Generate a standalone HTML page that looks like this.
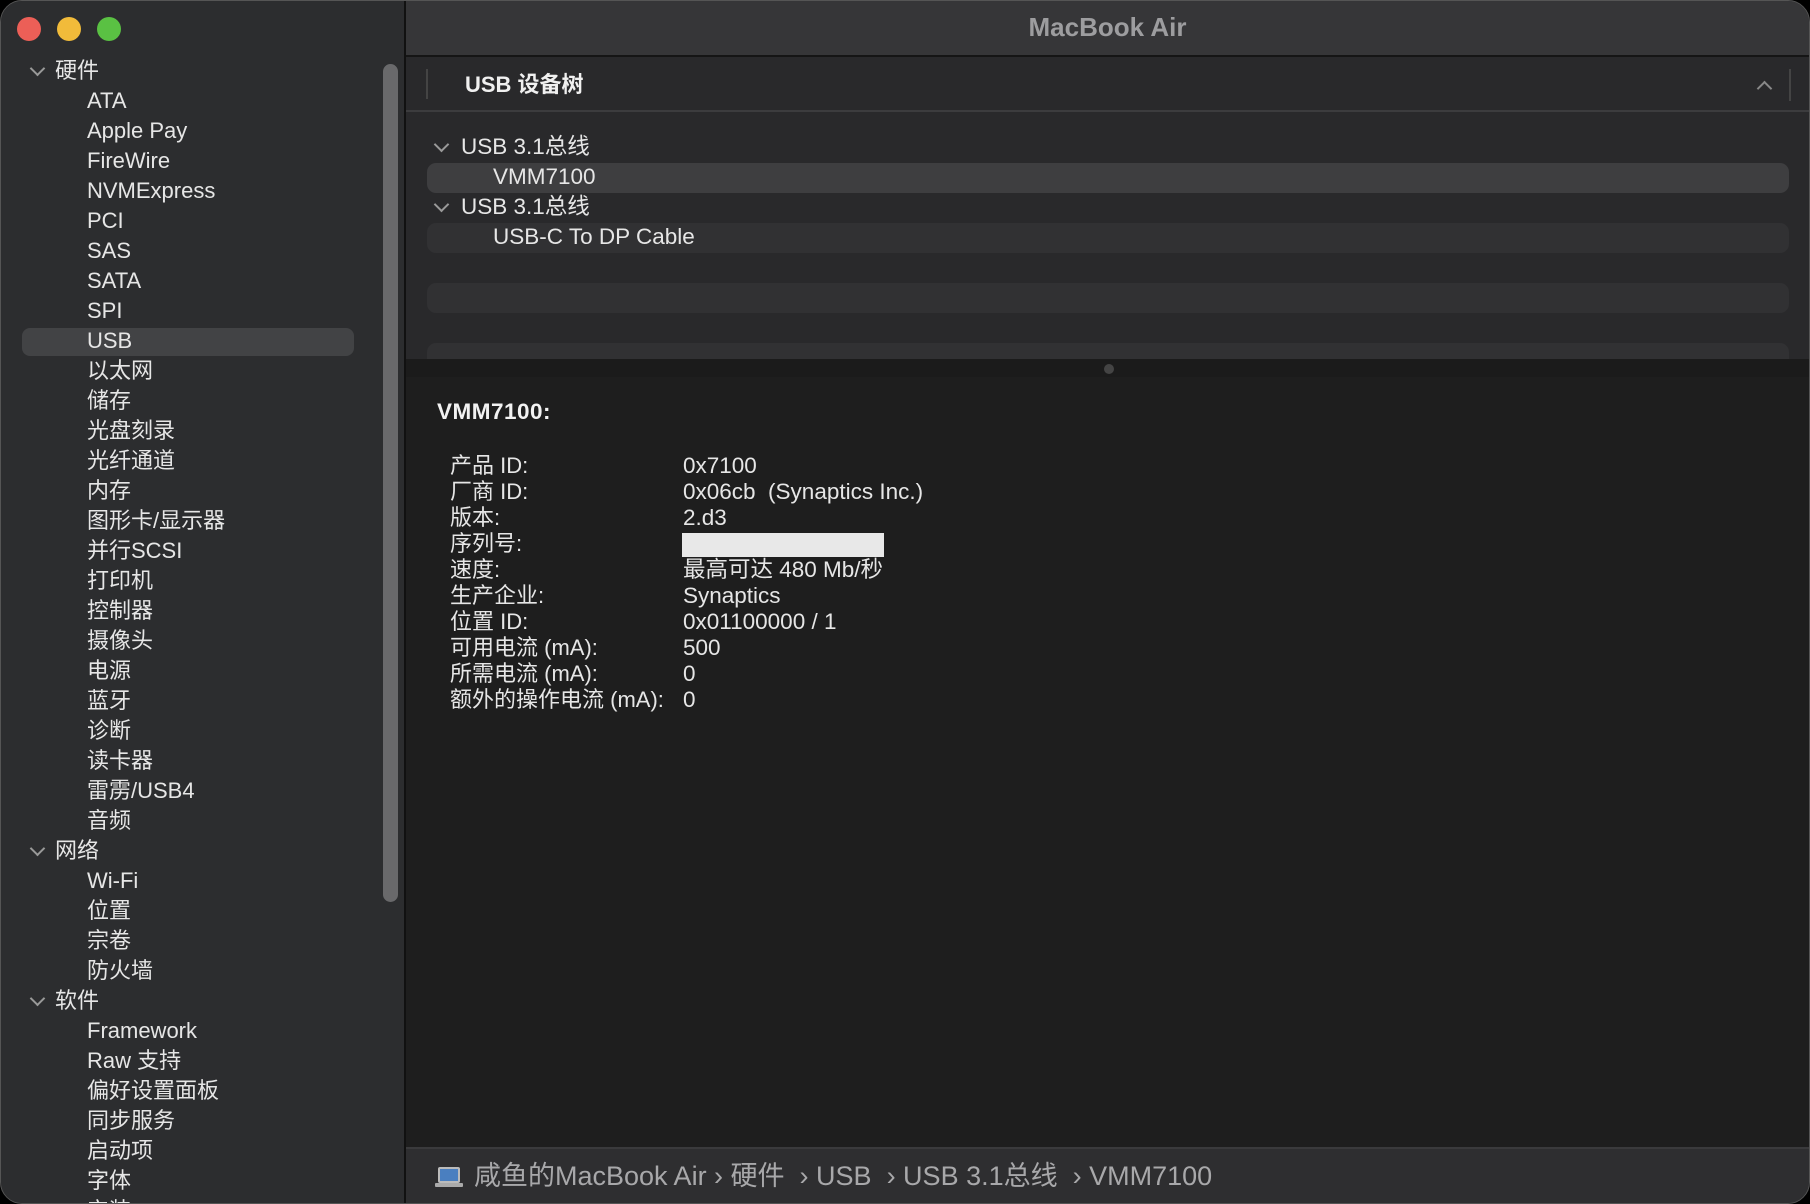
<!DOCTYPE html>
<html><head><meta charset="utf-8"><style>
*{margin:0;padding:0;box-sizing:border-box}
body{width:1810px;height:1204px;background:#000;overflow:hidden;font-family:"Liberation Sans","Noto Sans CJK SC",sans-serif;color:#e6e6e6}
.win{position:absolute;left:0;top:0;width:1810px;height:1204px;border-radius:22px;overflow:hidden;background:#2a2a2c;border:1px solid #555}
.side{position:absolute;left:0;top:0;width:405px;height:1204px;background:#2c2d2f;border-right:2px solid #111}
.tl{position:absolute;top:16px;width:24px;height:24px;border-radius:50%}
.row{position:absolute;left:0;height:30px;line-height:30px;font-size:22px;white-space:nowrap}
.chev{position:absolute;width:11px;height:11px;border-right:2px solid #999;border-bottom:2px solid #999;transform:rotate(45deg)}
.title{position:absolute;left:405px;top:0;right:0;height:56px;background:#363638;border-bottom:2px solid #151515;text-align:center;line-height:52px;font-size:26px;font-weight:bold;color:#9d9d9f}
.top{position:absolute;left:405px;top:56px;right:0;height:302px;background:#29292b}
.hdr{position:absolute;left:0;top:0;right:0;height:55px;border-bottom:2px solid #3c3c3e}
.band{position:absolute;left:21px;right:20px;height:30px;border-radius:9px;background:#313133}
.trow{position:absolute;font-size:22.5px;line-height:30px;white-space:nowrap}
.det{position:absolute;left:405px;top:358px;right:0;height:788px;background:#1e1e1e}
.lab{position:absolute;left:44px;font-size:22px;line-height:26px;white-space:nowrap}
.val{position:absolute;left:277px;font-size:22.5px;line-height:26px;white-space:nowrap}
.bot{position:absolute;left:405px;top:1146px;right:0;bottom:0;background:#2e2e30;border-top:2px solid #3a3a3c;font-size:27px;color:#a8a8aa;line-height:54px;white-space:nowrap}
</style></head><body><div class="win">
<div class="side">
<div class="tl" style="left:16px;background:#ec5f57"></div>
<div class="tl" style="left:56px;background:#f1bb3a"></div>
<div class="tl" style="left:96px;background:#5ac143"></div>
<div style="position:absolute;left:21px;top:327px;width:332px;height:28px;border-radius:8px;background:#424345"></div>
<div style="position:absolute;left:382px;top:63px;width:15px;height:838px;border-radius:8px;background:#69696b"></div>
<div id="list"></div>
</div>
<div class="title">MacBook Air</div>
<div class="top">
<div class="hdr">
<div style="position:absolute;left:20px;top:12px;width:2px;height:30px;background:#444"></div>
<div style="position:absolute;left:59px;top:0;line-height:55px;font-size:22px;font-weight:bold;color:#f0f0f0">USB 设备树</div>
<div style="position:absolute;left:1353px;top:26px;width:11px;height:11px;border-left:2px solid #888;border-top:2px solid #888;transform:rotate(45deg)"></div>
<div style="position:absolute;left:1383px;top:12px;width:2px;height:32px;background:#444"></div>
</div>
<div class="band" style="top:106px;background:#3e3e40"></div>
<div class="band" style="top:166px"></div>
<div class="band" style="top:226px"></div>
<div class="band" style="top:286px;height:16px;border-radius:9px 9px 0 0"></div>
<div class="chev" style="left:30px;top:82px"></div>
<div class="trow" style="left:55px;top:75px">USB 3.1总线</div>
<div class="trow" style="left:87px;top:105px">VMM7100</div>
<div class="chev" style="left:30px;top:142px"></div>
<div class="trow" style="left:55px;top:135px">USB 3.1总线</div>
<div class="trow" style="left:87px;top:165px">USB-C To DP Cable</div>
</div>
<div class="det">
<div style="position:absolute;left:0;right:0;top:0;height:18px;background:#1b1b1b"></div>
<div style="position:absolute;left:698px;top:5px;width:10px;height:10px;border-radius:50%;background:#444"></div>
<div style="position:absolute;left:31px;top:40px;font-size:22.5px;font-weight:bold;color:#f2f2f2;letter-spacing:0.5px">VMM7100:</div>
<div class="lab" style="top:94px">产品 ID:</div><div class="val" style="top:94px">0x7100</div>
<div class="lab" style="top:120px">厂商 ID:</div><div class="val" style="top:120px">0x06cb&nbsp; (Synaptics Inc.)</div>
<div class="lab" style="top:146px">版本:</div><div class="val" style="top:146px">2.d3</div>
<div class="lab" style="top:172px">序列号:</div><div style="position:absolute;left:276px;top:174px;width:202px;height:24px;background:#e8e8e8"></div>
<div class="lab" style="top:198px">速度:</div><div class="val" style="top:198px">最高可达 480 Mb/秒</div>
<div class="lab" style="top:224px">生产企业:</div><div class="val" style="top:224px">Synaptics</div>
<div class="lab" style="top:250px">位置 ID:</div><div class="val" style="top:250px">0x01100000 / 1</div>
<div class="lab" style="top:276px">可用电流 (mA):</div><div class="val" style="top:276px">500</div>
<div class="lab" style="top:302px">所需电流 (mA):</div><div class="val" style="top:302px">0</div>
<div class="lab" style="top:328px">额外的操作电流 (mA):</div><div class="val" style="top:328px">0</div>
</div>
<div class="bot"><span style="position:absolute;left:32px;top:18px;width:22px;height:16px;background:#4a7fc0;border:2px solid #bbb;border-radius:2px"></span><span style="position:absolute;left:29px;top:34px;width:28px;height:4px;background:#aaa;border-radius:1px"></span><span style="position:absolute;left:68px">咸鱼的MacBook Air › 硬件&nbsp; › USB&nbsp; › USB 3.1总线&nbsp; › VMM7100</span></div>
</div>
<script>
var items=[["硬件",0],["ATA",1],["Apple Pay",1],["FireWire",1],["NVMExpress",1],["PCI",1],["SAS",1],["SATA",1],["SPI",1],["USB",1],["以太网",1],["储存",1],["光盘刻录",1],["光纤通道",1],["内存",1],["图形卡/显示器",1],["并行SCSI",1],["打印机",1],["控制器",1],["摄像头",1],["电源",1],["蓝牙",1],["诊断",1],["读卡器",1],["雷雳/USB4",1],["音频",1],["网络",0],["Wi-Fi",1],["位置",1],["宗卷",1],["防火墙",1],["软件",0],["Framework",1],["Raw 支持",1],["偏好设置面板",1],["同步服务",1],["启动项",1],["字体",1],["安装",1]];
var h="";items.forEach(function(it,i){var t=55+i*30;
if(it[1]==0){h+='<div class="chev" style="left:31px;top:'+(t+7)+'px"></div><div class="row" style="left:54px;top:'+t+'px">'+it[0]+'</div>';}
else h+='<div class="row" style="left:86px;top:'+t+'px">'+it[0]+'</div>';});
document.getElementById("list").innerHTML=h;
</script>
</body></html>
